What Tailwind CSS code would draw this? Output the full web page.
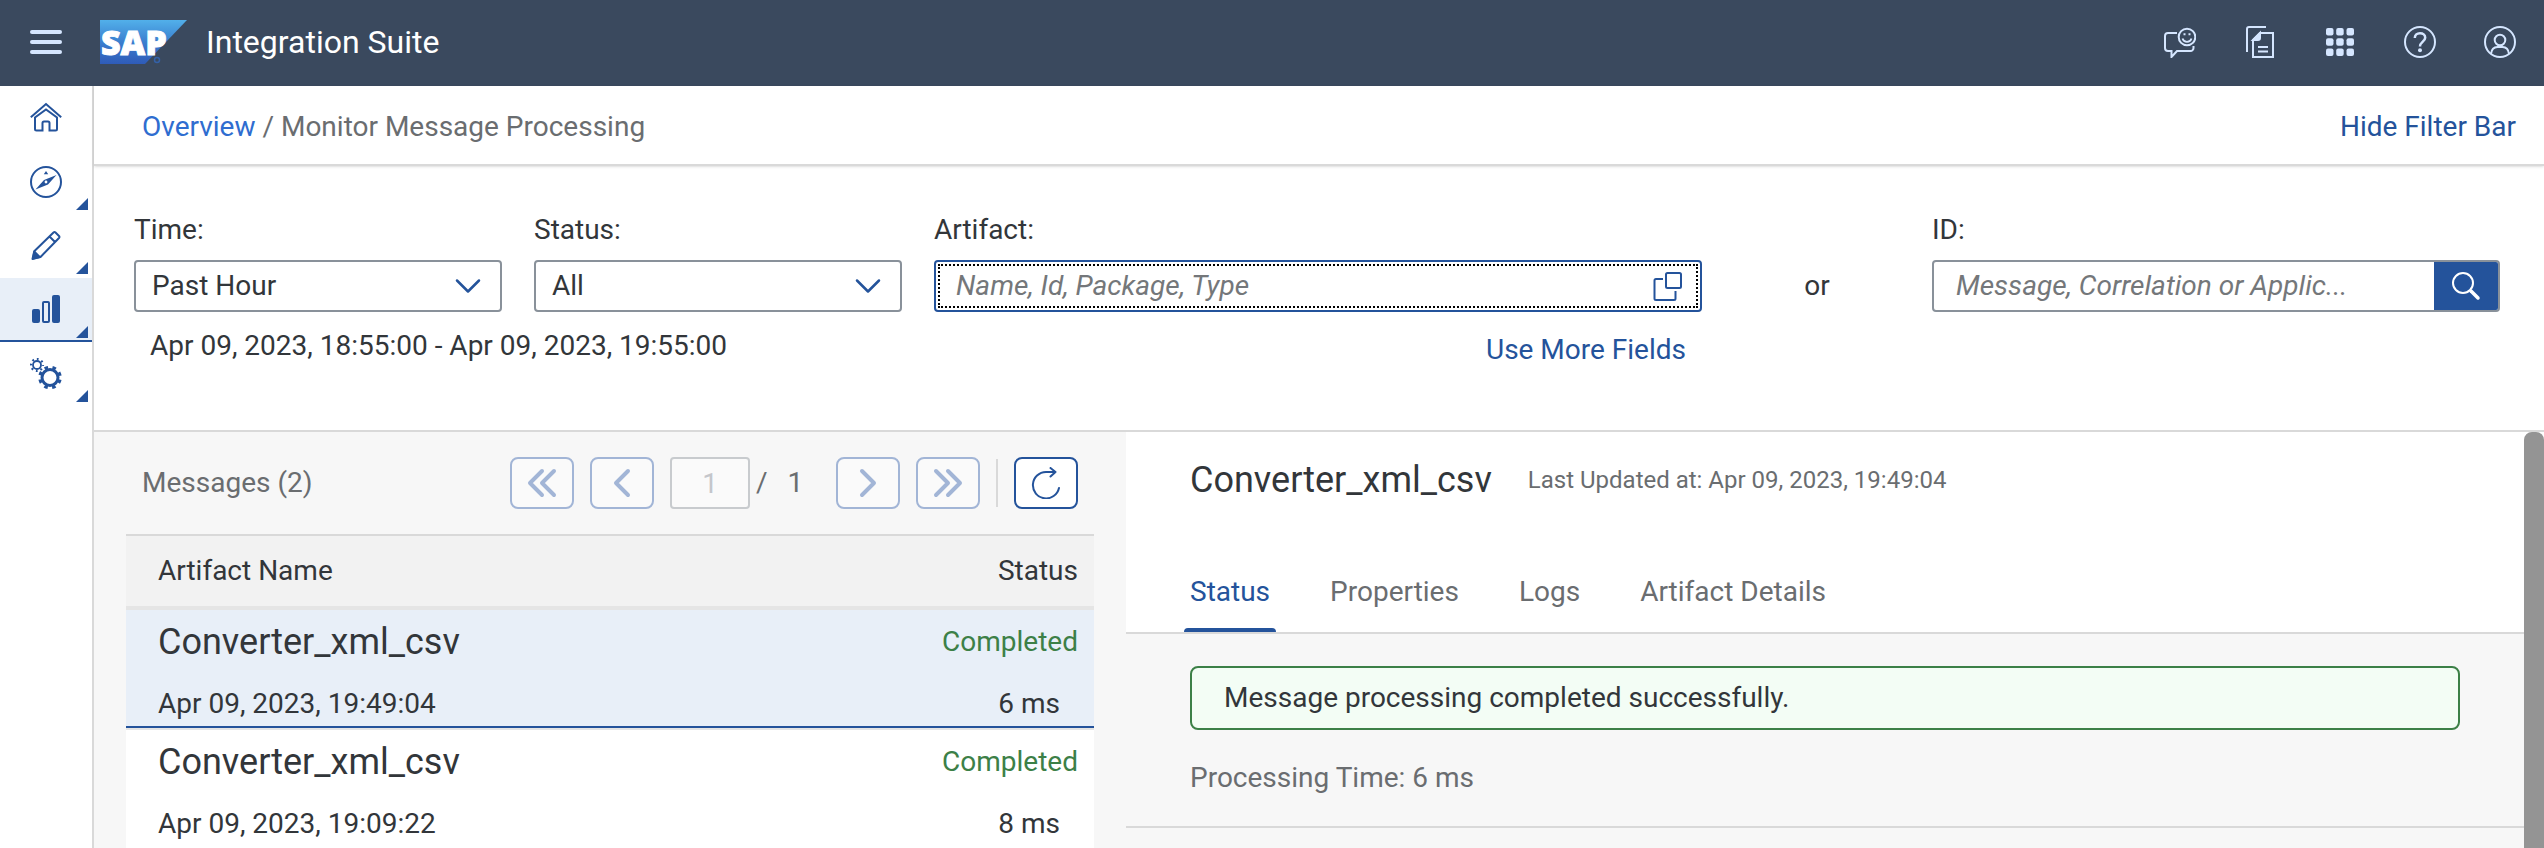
<!DOCTYPE html>
<html lang="en">
<head>
<meta charset="utf-8">
<meta name="viewport" content="width=device-width, initial-scale=1">
<title>Integration Suite - Monitor Message Processing</title>
<script src="https://cdn.jsdelivr.net/npm/@tailwindcss/browser@4"></script>
</head>
<body class="flex h-screen flex-col overflow-hidden bg-white font-['Roboto','Noto_Sans',sans-serif] text-[28px] leading-8 text-[#32363a]">

<header class="flex h-[86px] shrink-0 items-center bg-[#3a495e] pb-[2px] pl-[30px] pr-7 text-[#d5e6ff]">
  <button type="button" aria-label="Menu" class="flex w-8 flex-col gap-[6px]">
    <span class="h-1 w-full rounded-full bg-current"></span>
    <span class="h-1 w-full rounded-full bg-current"></span>
    <span class="h-1 w-full rounded-full bg-current"></span>
  </button>
  <svg class="ml-[38px] h-14 w-[88px]" viewBox="0 -6 88 56" role="img" aria-label="SAP">
    <defs><linearGradient id="sap" x1="0" y1="0" x2="0" y2="1"><stop offset="0" stop-color="#52b0ea"/><stop offset="0.5" stop-color="#3a7fcf"/><stop offset="1" stop-color="#2f5bb8"/></linearGradient></defs>
    <path d="M0 0H87L45 44H0Z" fill="url(#sap)"/>
    <text x="1" y="35" font-family="Open Sans" font-weight="800" font-size="34" fill="#fff" stroke="#fff" stroke-width="1">SAP</text>
    <circle cx="57" cy="40" r="2.500" fill="none" stroke="#3461a8" stroke-width="1.500"/>
  </svg>
  <h1 class="ml-[18px] text-[32px] leading-10 text-white">Integration Suite</h1>
  <div class="ml-auto flex gap-12">
    <button type="button" aria-label="Feedback"><svg class="size-8" viewBox="0 0 32 32" fill="none" stroke="currentColor" stroke-width="2"><path d="M13 7H4a3 3 0 0 0-3 3v12a3 3 0 0 0 3 3h3.500v6l5.500-6h13.500a3 3 0 0 0 3-3v-2"/><circle cx="23" cy="11" r="8.300"/><path d="M18.500 12.500a4.700 4.700 0 0 0 9 0" stroke-width="1.800"/><path d="M19.500 8.300h2M24.500 8.300h2"/></svg></button>
    <button type="button" aria-label="Documents"><svg class="size-8" viewBox="0 0 32 32" fill="none" stroke="currentColor" stroke-width="2"><path d="M3 26V3a2 2 0 0 1 2-2h17M9 14l7-7h13v24H9zM14 21h10M14 25.500h10"/><path d="M9 14l7-7v5a2 2 0 0 1-2 2z" fill="currentColor"/></svg></button>
    <button type="button" aria-label="Products"><svg class="size-8" viewBox="0 0 32 32" fill="currentColor"><rect x="2" y="2" width="7.500" height="7.500" rx="2"/><rect x="12.200" y="2" width="7.500" height="7.500" rx="2"/><rect x="22.500" y="2" width="7.500" height="7.500" rx="2"/><rect x="2" y="12.200" width="7.500" height="7.500" rx="2"/><rect x="12.200" y="12.200" width="7.500" height="7.500" rx="2"/><rect x="22.500" y="12.200" width="7.500" height="7.500" rx="2"/><rect x="2" y="22.500" width="7.500" height="7.500" rx="2"/><rect x="12.200" y="22.500" width="7.500" height="7.500" rx="2"/><rect x="22.500" y="22.500" width="7.500" height="7.500" rx="2"/></svg></button>
    <button type="button" aria-label="Help"><svg class="size-8" viewBox="0 0 32 32" fill="none" stroke="currentColor" stroke-width="2"><circle cx="16" cy="16" r="15"/><path d="M10.800 12c0-3 2.200-4.700 5.200-4.700s5.200 1.700 5.200 4.500c0 3.700-5.200 4.200-5.200 8.700" stroke-width="2.500"/><circle cx="16" cy="24.300" r="2" fill="currentColor" stroke="none"/></svg></button>
    <button type="button" aria-label="Profile"><svg class="size-8" viewBox="0 0 32 32" fill="none" stroke="currentColor" stroke-width="2"><circle cx="16" cy="16" r="15"/><circle cx="16" cy="14" r="5.300"/><path d="M7 28c.5-4.500 3-7 6.500-7h5c3.500 0 6 2.500 6.500 7"/></svg></button>
  </div>
</header>

<div class="flex min-h-0 flex-1">
  <nav aria-label="Main" class="w-[94px] shrink-0 border-r-2 border-[#d9d9d9] text-[#24539b]">
    <a href="#" aria-label="Home" class="flex h-16 items-center justify-center"><svg class="size-8" viewBox="0 0 32 32" fill="none" stroke="currentColor" stroke-width="2"><path d="M.8 15.200L16 2l15.200 13.200"/><path d="M5 15.500V27a1.500 1.500 0 0 0 1.500 1.500h6V21a1.500 1.500 0 0 1 1.500-1.500h4a1.500 1.500 0 0 1 1.500 1.500v7.500h6A1.500 1.500 0 0 0 27 27V15.500L16 7.500z"/></svg></a>
    <a href="#" aria-label="Discover" class="relative flex h-16 items-center justify-center"><svg class="size-8" viewBox="0 0 32 32"><circle cx="16" cy="16" r="15" fill="none" stroke="currentColor" stroke-width="2"/><path fill="currentColor" fill-rule="evenodd" d="M5.500 23.500l8.500-9.500L26.500 9 18 18.500zM16 14.600a1.400 1.400 0 1 0 0 2.800 1.400 1.400 0 0 0 0-2.800zM16 5l2.200 3.200h-4.400z"/></svg><span class="absolute bottom-1 right-1 size-3 bg-current [clip-path:polygon(100%_0,100%_100%,0_100%)]"></span></a>
    <a href="#" aria-label="Design" class="relative flex h-16 items-center justify-center"><svg class="size-8" viewBox="0 0 32 32" fill="none" stroke="currentColor" stroke-width="2" stroke-linejoin="round"><path d="M3 28.500l1.500-7.500L23.500 2.500a1.500 1.500 0 0 1 2 0l3.500 3.500a1.500 1.500 0 0 1 0 2L10.500 27zM19.500 6.500l5.500 5.500"/><path d="M2.500 29l1.700-7.500 5.500 5.500z" fill="currentColor"/></svg><span class="absolute bottom-1 right-1 size-3 bg-current [clip-path:polygon(100%_0,100%_100%,0_100%)]"></span></a>
    <a href="#" aria-label="Monitor" aria-current="page" class="relative flex h-16 items-center justify-center bg-[#e8eff8] shadow-[inset_0_-2px_0_#24539b]"><svg class="size-8" viewBox="0 0 32 32" fill="currentColor"><rect x="2" y="15" width="8" height="14" rx="2"/><rect x="13" y="8" width="6" height="20" rx="1" fill="none" stroke="currentColor" stroke-width="2"/><rect x="22" y="1" width="8" height="28" rx="2"/></svg><span class="absolute bottom-1 right-1 size-3 bg-current [clip-path:polygon(100%_0,100%_100%,0_100%)]"></span></a>
    <a href="#" aria-label="Settings" class="relative flex h-16 items-center justify-center"><svg class="size-8" viewBox="0 0 32 32" fill="none" stroke="currentColor"><circle cx="7" cy="7" r="4" stroke-width="1.800"/><circle cx="7" cy="7" r="6" stroke-width="2.200" stroke-dasharray="1.800 2.912" stroke-dashoffset="0.900"/><circle cx="20" cy="19.500" r="8" stroke-width="3"/><circle cx="20" cy="19.500" r="10.300" stroke-width="3" stroke-dasharray="3.600 4.490" stroke-dashoffset="-2.200"/></svg><span class="absolute bottom-1 right-1 size-3 bg-current [clip-path:polygon(100%_0,100%_100%,0_100%)]"></span></a>
  </nav>

  <main class="flex min-w-0 flex-1 flex-col">
    <div class="flex h-20 shrink-0 items-center justify-between border-b-2 border-[#d9d9d9] pl-12 pr-7 pt-1 shadow-sm">
      <nav aria-label="Breadcrumb" class="text-[#6a6d70]"><a href="#" class="text-[#2f6dd0]">Overview</a> / <span>Monitor Message Processing</span></nav>
      <button type="button" class="text-[#24539b]">Hide Filter Bar</button>
    </div>

    <form class="grid shrink-0 grid-cols-[368fr_368fr_768fr_166fr_568fr] gap-8 border-b-2 border-[#d9d9d9] pb-16 pl-10 pr-11 pt-12">
      <div class="min-w-0">
        <label for="time" class="block">Time:</label>
        <div class="mt-[14px] grid h-[52px] items-center">
          <select id="time" class="col-start-1 row-start-1 h-full w-full appearance-none rounded-sm border-2 border-[#89919a] bg-white pl-4"><option>Past Hour</option></select>
          <svg class="pointer-events-none col-start-1 row-start-1 mr-5 w-7 justify-self-end" viewBox="0 0 28 16" fill="none" stroke="#24539b" stroke-width="2.500" stroke-linecap="round" stroke-linejoin="round"><path d="M3 2.500l11 11 11-11"/></svg>
        </div>
        <p class="mt-[18px] whitespace-nowrap pl-4">Apr 09, 2023, 18:55:00 - Apr 09, 2023, 19:55:00</p>
      </div>
      <div class="min-w-0">
        <label for="status" class="block">Status:</label>
        <div class="mt-[14px] grid h-[52px] items-center">
          <select id="status" class="col-start-1 row-start-1 h-full w-full appearance-none rounded-sm border-2 border-[#89919a] bg-white pl-4"><option>All</option></select>
          <svg class="pointer-events-none col-start-1 row-start-1 mr-5 w-7 justify-self-end" viewBox="0 0 28 16" fill="none" stroke="#24539b" stroke-width="2.500" stroke-linecap="round" stroke-linejoin="round"><path d="M3 2.500l11 11 11-11"/></svg>
        </div>
      </div>
      <div class="min-w-0">
        <label for="artifact" class="block">Artifact:</label>
        <div class="mt-[14px] h-[52px] rounded-sm border-2 border-[#24539b] p-[2px]">
          <div class="flex h-full items-center border-2 border-dotted border-black pl-4 pr-3">
            <input id="artifact" type="text" placeholder="Name, Id, Package, Type" class="min-w-0 flex-1 outline-none placeholder:italic placeholder:text-[#74777a]">
            <button type="button" aria-label="Select artifact"><svg class="size-8" viewBox="0 0 32 32" fill="none" stroke="#24539b" stroke-width="2"><rect x="14" y="3" width="15" height="15" rx="1.500"/><path d="M11 9H4a1.500 1.500 0 0 0-1.500 1.500v18A1.500 1.500 0 0 0 4 30h18a1.500 1.500 0 0 0 1.500-1.500V21"/></svg></button>
          </div>
        </div>
        <div class="mt-[22px] flex justify-end pr-4"><button type="button" class="text-[#24539b]">Use More Fields</button></div>
      </div>
      <div class="pt-14 text-center">or</div>
      <div class="min-w-0">
        <label for="msgid" class="block">ID:</label>
        <div class="mt-[14px] flex h-[52px] overflow-hidden rounded-sm border-2 border-[#89919a]">
          <input id="msgid" type="text" placeholder="Message, Correlation or Applic..." class="min-w-0 flex-1 pl-[22px] outline-none placeholder:italic placeholder:text-[#74777a]">
          <button type="button" aria-label="Search" class="flex w-16 items-center justify-center bg-[#24539b] text-white"><svg class="size-8" viewBox="0 0 32 32" fill="none" stroke="currentColor" stroke-linecap="round"><circle cx="13" cy="13" r="10" stroke-width="2"/><path d="M21 21l7 7" stroke-width="3.500"/></svg></button>
        </div>
      </div>
    </form>

    <div class="flex min-h-0 flex-1 bg-[#f7f7f7]">
      <div class="grid min-w-0 flex-1 grid-cols-[1032fr_1398fr]">
        <section class="min-w-0 px-8">
          <div class="flex h-[102px] items-center pl-4 pr-4 text-[#6a6d70]">
            <h2>Messages (2)</h2>
            <div class="ml-auto flex items-center gap-4">
              <button type="button" disabled aria-label="First page" class="flex h-[52px] w-16 items-center justify-center rounded-lg border-2 border-[#a2b5d6] bg-[#fafafa]"><svg class="size-8" viewBox="0 0 32 32" fill="none" stroke="#a2b5d6" stroke-width="4" stroke-linecap="round" stroke-linejoin="round"><path d="M16 4L4 16l12 12M28 4L16 16l12 12"/></svg></button>
              <button type="button" disabled aria-label="Previous page" class="flex h-[52px] w-16 items-center justify-center rounded-lg border-2 border-[#a2b5d6] bg-[#fafafa]"><svg class="size-8" viewBox="0 0 32 32" fill="none" stroke="#a2b5d6" stroke-width="4" stroke-linecap="round" stroke-linejoin="round"><path d="M22 4L10 16l12 12"/></svg></button>
              <div class="flex w-[150px] items-center">
                <input type="text" value="1" disabled aria-label="Page" class="h-[52px] w-20 rounded-sm border-2 border-[#c8cbce] bg-[#fafafa] text-center text-[#c4c6cb]">
                <span class="pl-[6px]">/</span><span class="pl-5">1</span>
              </div>
              <button type="button" disabled aria-label="Next page" class="flex h-[52px] w-16 items-center justify-center rounded-lg border-2 border-[#a2b5d6] bg-[#fafafa]"><svg class="size-8" viewBox="0 0 32 32" fill="none" stroke="#a2b5d6" stroke-width="4" stroke-linecap="round" stroke-linejoin="round"><path d="M10 4l12 12-12 12"/></svg></button>
              <button type="button" disabled aria-label="Last page" class="flex h-[52px] w-16 items-center justify-center rounded-lg border-2 border-[#a2b5d6] bg-[#fafafa]"><svg class="size-8" viewBox="0 0 32 32" fill="none" stroke="#a2b5d6" stroke-width="4" stroke-linecap="round" stroke-linejoin="round"><path d="M4 4l12 12L4 28M16 4l12 12-12 12"/></svg></button>
              <span class="h-12 w-[2px] bg-[#d9d9d9]"></span>
              <button type="button" aria-label="Refresh" class="flex h-[52px] w-16 items-center justify-center rounded-lg border-2 border-[#24539b] bg-white"><svg class="size-8" viewBox="0 0 32 32" fill="none" stroke="#24539b" stroke-width="2" stroke-linecap="round" stroke-linejoin="round"><path d="M29 21A13.200 13.200 0 1 1 16 5h9.500M20.500 1L25.500 5l-5 4.500"/></svg></button>
            </div>
          </div>
          <table class="w-full border-separate border-spacing-0 bg-white">
            <thead class="bg-[#f2f2f2]">
              <tr>
                <th class="h-[76px] border-b-4 border-t-2 border-b-[#e5e5e5] border-t-[#d9d9d9] pl-8 text-left font-normal">Artifact Name</th>
                <th class="border-b-4 border-t-2 border-b-[#e5e5e5] border-t-[#d9d9d9] pr-4 text-right font-normal">Status</th>
              </tr>
            </thead>
            <tbody>
              <tr class="bg-[#e8eff8]" aria-selected="true">
                <td class="border-b-2 border-[#24539b] pb-[6px] pl-8 pt-[10px]"><div class="text-4xl leading-11">Converter_xml_csv</div><div class="mt-6">Apr 09, 2023, 19:49:04</div></td>
                <td class="border-b-2 border-[#24539b] pb-[6px] pr-4 pt-[10px] text-right"><div class="leading-11 text-[#3c8047]">Completed</div><div class="mt-6 pr-[18px]">6 ms</div></td>
              </tr>
              <tr>
                <td class="border-t-2 border-[#e5e5e5] pb-4 pl-8 pt-[10px]"><div class="text-4xl leading-11">Converter_xml_csv</div><div class="mt-6">Apr 09, 2023, 19:09:22</div></td>
                <td class="border-t-2 border-[#e5e5e5] pb-4 pr-4 pt-[10px] text-right"><div class="leading-11 text-[#3c8047]">Completed</div><div class="mt-6 pr-[18px]">8 ms</div></td>
              </tr>
            </tbody>
          </table>
        </section>

        <section class="min-w-0">
          <div class="border-b-2 border-[#d9d9d9] bg-white pl-16 pt-[26px]">
            <div class="flex items-center gap-9">
              <h2 class="text-4xl leading-11">Converter_xml_csv</h2>
              <span class="text-2xl leading-8 text-[#6a6d70]">Last Updated at: Apr 09, 2023, 19:49:04</span>
            </div>
            <div role="tablist" class="-ml-[6px] mt-[74px] flex gap-12 text-[#6a6d70]">
              <button type="button" role="tab" aria-selected="true" class="flex flex-col text-[#24539b]"><span class="px-[6px]">Status</span><span class="mt-5 h-1 w-full rounded-t-sm bg-current"></span></button>
              <button type="button" role="tab" aria-selected="false" class="px-[6px] pb-6">Properties</button>
              <button type="button" role="tab" aria-selected="false" class="px-[6px] pb-6">Logs</button>
              <button type="button" role="tab" aria-selected="false" class="px-[6px] pb-6">Artifact Details</button>
            </div>
          </div>
          <div class="border-b-2 border-[#d9d9d9] px-16 py-8">
            <div role="status" class="flex h-16 items-center rounded-lg border-2 border-[#3c8047] bg-[#f3fdf5] px-8">Message processing completed successfully.</div>
            <p class="mt-8 text-[#6a6d70]">Processing Time: 6 ms</p>
          </div>
        </section>
      </div>
      <div aria-hidden="true" class="w-5 shrink-0 bg-white"><div class="h-full rounded-t-lg bg-[#949494]"></div></div>
    </div>
  </main>
</div>
</body>
</html>
